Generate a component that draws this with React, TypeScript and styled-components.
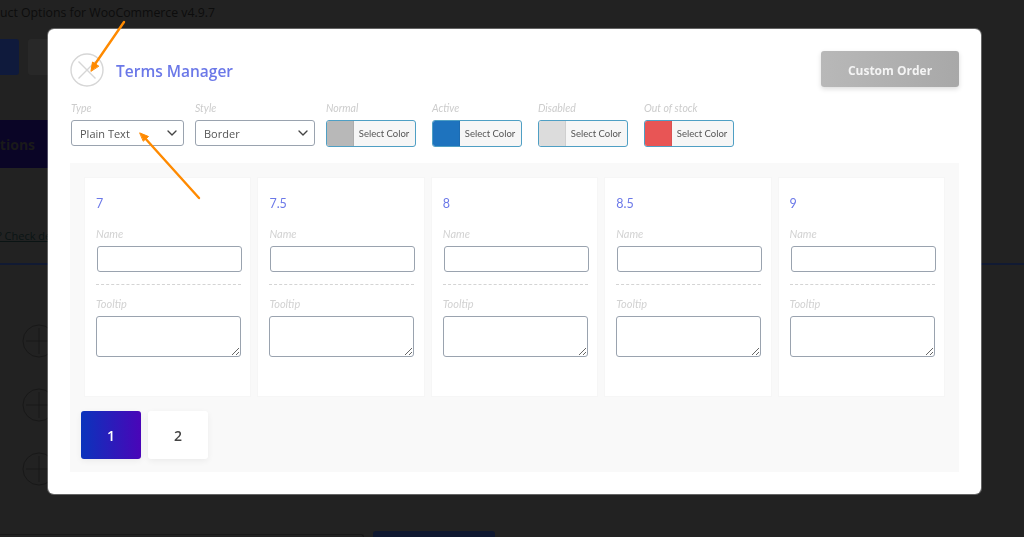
import styled, { createGlobalStyle } from "styled-components";
import { ChevronDown } from "lucide-react";

const terms = ["7", "7.5", "8", "8.5", "9"];

const colors = [
  { label: "Normal", swatch: "#b8b8b8" },
  { label: "Active", swatch: "#1e73be" },
  { label: "Disabled", swatch: "#dcdcdc" },
  { label: "Out of stock", swatch: "#e85555" },
];

const App = () => {
  return (
    <>
      <GlobalStyle />
      <BackPage>
        <BackTitle>uct Options for WooCommerce v4.9.7</BackTitle>
        <BackButtons>
          <BackButton $color="#0f1a3c" />
          <BackButton $color="#282828" />
        </BackButtons>
        <BackTab>ptions</BackTab>
        <BackLink>? Check details</BackLink>
        <BackRule />
        <BackCircles>
          {[0, 1, 2].map((idx) => (
            <BackCircle key={idx}>
              <svg width="34" height="34" viewBox="0 0 34 34" fill="none" stroke="#181818" strokeWidth="1">
                <circle cx="17" cy="17" r="16" />
                <path d="M17 4v26M4 17h26" />
              </svg>
            </BackCircle>
          ))}
        </BackCircles>
        <BackFooter>
          <BackFooterLine />
          <BackFooterButton />
        </BackFooter>
      </BackPage>

      <Modal>
        <Header>
          <CloseButton aria-label="Close">
            <svg width="34" height="34" viewBox="0 0 34 34" fill="none" stroke="#d6d6d6" strokeWidth="1.4">
              <circle cx="17" cy="17" r="16" />
              <path d="M8.5 8.5l17 17M25.500 8.500l-17 17" />
            </svg>
          </CloseButton>
          <Title>Terms Manager</Title>
          <OrderButton>Custom Order</OrderButton>
        </Header>

        <Controls>
          <Field>
            <FieldLabel>Type</FieldLabel>
            <SelectWrap $width={113}>
              <Select defaultValue="Plain Text">
                <option>Plain Text</option>
              </Select>
              <Chevron size={16} strokeWidth={2} />
            </SelectWrap>
          </Field>
          <Field>
            <FieldLabel>Style</FieldLabel>
            <SelectWrap $width={120}>
              <Select defaultValue="Border">
                <option>Border</option>
              </Select>
              <Chevron size={16} strokeWidth={2} />
            </SelectWrap>
          </Field>
          {colors.map((color) => (
            <ColorField key={color.label}>
              <FieldLabel>{color.label}</FieldLabel>
              <ColorPicker>
                <Swatch $color={color.swatch} />
                <ColorText>Select Color</ColorText>
              </ColorPicker>
            </ColorField>
          ))}
        </Controls>

        <Panel>
          <Cards>
            {terms.map((term) => (
              <Card key={term}>
                <TermName>{term}</TermName>
                <CardLabel>Name</CardLabel>
                <NameInput />
                <Divider />
                <CardLabel>Tooltip</CardLabel>
                <TooltipInput />
              </Card>
            ))}
          </Cards>
          <Pagination>
            <PageButton $active>1</PageButton>
            <PageButton>2</PageButton>
          </Pagination>
        </Panel>
      </Modal>

      <Arrows width="1024" height="537" viewBox="0 0 1024 537" fill="none" stroke="#ff8a00" strokeWidth="2.4" strokeLinecap="round">
        <path d="M124 22L93 67" />
        <path d="M91 71l1.500-9 6 4z" fill="#ff8a00" strokeWidth="1" />
        <path d="M199 198L144 137" />
        <path d="M140 133l8.500 3.500-5 4.500z" fill="#ff8a00" strokeWidth="1" />
      </Arrows>
    </>
  );
};

export default App;

const GlobalStyle = createGlobalStyle`
  html, body {
    margin: 0;
    padding: 0;
    height: 537px;
    overflow: hidden;
    background: #222222;
    font-family: "Open Sans", "Liberation Sans", sans-serif;
  }
  * {
    box-sizing: border-box;
  }
`;

const BackPage = styled.div`
  display: flex;
  flex-direction: column;
  height: 537px;
  overflow: hidden;
  background: #222222;
`;

const BackTitle = styled.div`
  height: 39px;
  padding-top: 3px;
  font-size: 12.300px;
  line-height: 20px;
  white-space: nowrap;
  color: #0d0d0d;
`;

const BackButtons = styled.div`
  display: flex;
  gap: 9px;
  margin-left: -20px;
`;

const BackButton = styled.div<{ $color: string }>`
  width: 39px;
  height: 36px;
  border-radius: 3px;
  background: ${({ $color }) => $color};
`;

const BackTab = styled.div`
  width: 48px;
  height: 48px;
  margin-top: 45px;
  font-size: 14px;
  font-weight: 700;
  line-height: 50px;
  white-space: nowrap;
  overflow: hidden;
  text-indent: -9px;
  color: #1a1a1a;
  background: #0a0526;
`;

const BackLink = styled.div`
  margin-top: 60px;
  font-size: 11px;
  line-height: 16px;
  white-space: nowrap;
  margin-left: -3px;
  color: #0a1414;
  text-decoration: underline;
`;

const BackRule = styled.div`
  height: 2px;
  margin-top: 19px;
  background: #111a33;
`;

const BackCircles = styled.div`
  display: flex;
  flex-direction: column;
  gap: 30px;
  margin: 59px 0 0 22px;
`;

const BackCircle = styled.div`
  height: 34px;
`;

const BackFooter = styled.div`
  display: flex;
  align-items: flex-end;
  gap: 9px;
  height: 6px;
  margin-top: 45px;
`;

const BackFooterLine = styled.div`
  width: 364px;
  height: 3px;
  border-top: 1px solid #181818;
  border-right: 1px solid #181818;
  border-top-right-radius: 3px;
`;

const BackFooterButton = styled.div`
  width: 122px;
  height: 6px;
  border-radius: 3px 3px 0 0;
  background: #0f1830;
`;

const Modal = styled.div`
  position: fixed;
  top: 29px;
  left: 48px;
  width: 933px;
  height: 465px;
  padding: 22px;
  border-radius: 6px;
  background: #ffffff;
  box-shadow: 0 0 0 1px rgba(255, 255, 255, 0.3);
`;

const Header = styled.div`
  display: flex;
  align-items: center;
  height: 36px;
`;

const CloseButton = styled.button`
  width: 34px;
  height: 34px;
  padding: 0;
  margin-top: 2px;
  border: 0;
  background: none;
  line-height: 0;
`;

const Title = styled.h2`
  flex: 1;
  margin: 3px 0 0 12px;
  font-size: 15.500px;
  font-weight: 600;
  line-height: 24px;
  color: #6b78e8;
`;

const OrderButton = styled.button`
  width: 138px;
  height: 36px;
  padding: 2px 0 0;
  border: 0;
  border-radius: 3px;
  font-family: inherit;
  font-size: 12px;
  font-weight: 700;
  color: #f4f4f4;
  background: linear-gradient(90deg, #b8b8b8, #a8a8a8);
  box-shadow: 0 2px 5px rgba(0, 0, 0, 0.14);
`;

const Controls = styled.div`
  display: flex;
  margin-top: 15px;
  margin-left: 1px;
  gap: 11px;
`;

const Field = styled.div`
  display: flex;
  flex-direction: column;
`;

const ColorField = styled(Field)`
  margin-right: 5px;
`;

const FieldLabel = styled.label`
  height: 13px;
  margin-bottom: 5px;
  font-family: Lato, "Liberation Sans", sans-serif;
  font-size: 10.500px;
  font-style: italic;
  line-height: 13px;
  white-space: nowrap;
  color: #cccccc;
`;

const SelectWrap = styled.div<{ $width: number }>`
  position: relative;
  width: ${({ $width }) => $width}px;
  height: 26px;
`;

const Select = styled.select`
  width: 100%;
  height: 100%;
  padding: 0 8px;
  border: 1px solid #9aa3af;
  border-radius: 3px;
  appearance: none;
  font-family: "Open Sans", sans-serif;
  font-size: 11px;
  color: #555555;
  background: #ffffff;
`;

const Chevron = styled(ChevronDown)`
  position: absolute;
  top: 5px;
  right: 4px;
  color: #444444;
  pointer-events: none;
`;

const ColorPicker = styled.div`
  display: flex;
  width: 90px;
  height: 27px;
  overflow: hidden;
  border: 1px solid #4f9fc4;
  border-radius: 3px;
  background: #f6f6f6;
`;

const Swatch = styled.span<{ $color: string }>`
  width: 27px;
  border-right: 1px solid rgba(0, 0, 0, 0.06);
  background: ${({ $color }) => $color};
`;

const ColorText = styled.span`
  flex: 1;
  padding-right: 1px;
  font-family: Lato, "Liberation Sans", sans-serif;
  font-size: 9.500px;
  line-height: 25px;
  text-align: center;
  white-space: nowrap;
  color: #555555;
`;

const Panel = styled.div`
  height: 309px;
  margin-top: 16px;
  padding: 14px 14px 0 11px;
  background: #f9f9f9;
`;

const Cards = styled.div`
  display: grid;
  grid-template-columns: repeat(5, minmax(0, 1fr));
  gap: 6px;
  margin-left: 3px;
`;

const Card = styled.div`
  height: 220px;
  padding: 17px 0 0 11px;
  border: 1px solid #f6f6f6;
  background: #ffffff;
`;

const TermName = styled.div`
  height: 19px;
  font-family: Lato, "Liberation Sans", sans-serif;
  font-size: 12.500px;
  line-height: 18px;
  color: #6b78e8;
`;

const CardLabel = styled.div`
  margin-top: 13px;
  font-family: Lato, "Liberation Sans", sans-serif;
  font-size: 11px;
  font-style: italic;
  line-height: 14px;
  color: #d2d2d2;
`;

const NameInput = styled.input`
  display: block;
  width: 145px;
  height: 26px;
  margin: 5px 0 0 1px;
  border: 1px solid #9aa3af;
  border-radius: 3px;
  background: #ffffff;
`;

const Divider = styled.div`
  width: 145px;
  margin-top: 12px;
  margin-bottom: -1px;
  border-top: 1px dashed #d4d4d4;
`;

const TooltipInput = styled.textarea`
  display: block;
  width: 145px;
  height: 41px;
  margin-top: 5px;
  border: 1px solid #9aa3af;
  border-radius: 3px;
  background: #ffffff;
`;

const Pagination = styled.div`
  display: flex;
  gap: 7px;
  margin-top: 14px;
`;

const PageButton = styled.button<{ $active?: boolean }>`
  width: 60px;
  height: 48px;
  border: 0;
  border-radius: 3px;
  font-family: inherit;
  font-size: 14px;
  font-weight: 600;
  color: ${({ $active }) => ($active ? "#ffffff" : "#444444")};
  background: ${({ $active }) =>
    $active ? "linear-gradient(90deg, #0a34bc, #4a05b8)" : "#ffffff"};
  box-shadow: 0 2px 6px rgba(0, 0, 0, 0.06);
`;

const Arrows = styled.svg`
  position: fixed;
  top: 0;
  left: 0;
  pointer-events: none;
`;
